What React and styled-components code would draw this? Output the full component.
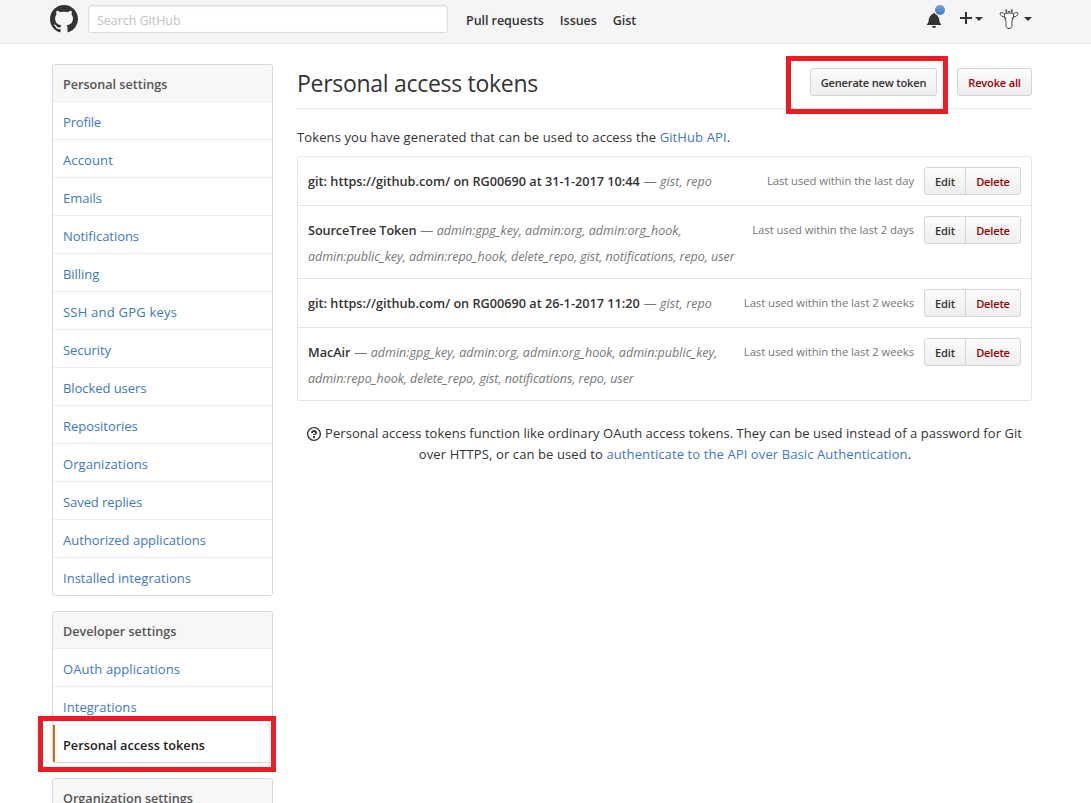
import React from "react";
import styled, { createGlobalStyle, css } from "styled-components";

const GlobalStyle = createGlobalStyle`
  *, *::before, *::after { box-sizing: border-box; }
  html, body { margin: 0; height: 803px; overflow: hidden; }
  body {
    background: #fff;
    color: #333;
    font: 13px/21px "Open Sans", "Noto Sans", sans-serif;
  }
`;

const Header = styled.header`
  height: 44px;
  padding: 5px 59px 0 50px;
  display: flex;
  align-items: flex-start;
  background: #f5f5f5;
  border-bottom: 1px solid #e5e5e5;
`;

const Logo = styled.svg`
  width: 28px;
  height: 28px;
  margin-right: 10px;
  fill: #333;
`;

const Search = styled.input`
  width: 360px;
  height: 28px;
  padding: 2px 8px 0;
  border: 1px solid #ddd;
  border-radius: 3px;
  background: #fff;
  box-shadow: inset 0 1px 2px rgba(0, 0, 0, 0.075);
  font: 12.5px "Open Sans", sans-serif;
  letter-spacing: -0.04px;
  outline: none;
  &::placeholder { color: #c2c2c2; opacity: 1; }
`;

const TopNav = styled.nav`
  display: flex;
  gap: 16px;
  margin-left: 18px;
  padding-top: 5px;
`;

const TopLink = styled.a`
  font-size: 12.5px;
  font-weight: 600;
  letter-spacing: -0.05px;
  color: #333;
`;

const Actions = styled.div`
  display: flex;
  margin-left: auto;
`;

const Bell = styled.div`
  position: relative;
  width: 14px;
  height: 16px;
  margin: 7px 19px 0 0;
  svg { display: block; fill: #333; }
  &::after {
    content: "";
    position: absolute;
    top: -7px;
    left: 8px;
    width: 10px;
    height: 10px;
    border-radius: 50%;
    background: linear-gradient(#7aa1d9, #4078c0);
  }
`;

const MenuButton = styled.div`
  display: flex;
  align-items: flex-start;
  margin-right: ${(p) => p.$gap || 0}px;
  svg { display: block; }
`;

const Caret = styled.span`
  margin: 12px 0 0 ${(p) => p.$gap}px;
  border: 4px solid transparent;
  border-top-color: #333;
  border-bottom: 0;
`;

const PlusIcon = styled.svg`
  margin-top: 5px;
  fill: #333;
`;

const Avatar = styled.svg`
  margin-top: 3px;
  fill: #fff;
  stroke: #444;
  stroke-width: 1;
`;

const Page = styled.div`
  display: flex;
  align-items: flex-start;
  gap: 24px;
  width: 980px;
  margin-left: 52px;
  padding-top: 20px;
`;

const Sidebar = styled.aside`
  width: 221px;
  flex: none;
`;

const Menu = styled.nav`
  margin-bottom: 15px;
  border: 1px solid #d8d8d8;
  border-radius: 3px;
  background: #fff;
`;

const MenuHeading = styled.h3`
  height: 37px;
  margin: 0;
  padding: 10px 10px 0;
  border-bottom: 1px solid #eee;
  border-radius: 2px 2px 0 0;
  background: #f7f7f7;
  color: #555;
  font-size: 12.6px;
  font-weight: 600;
  line-height: 20px;
`;

const highlight = css`
  &::after {
    content: "";
    position: absolute;
    inset: ${(p) => p.$ring};
    border: 5px solid #ed1c24;
    pointer-events: none;
  }
`;

const MenuItem = styled.a`
  display: block;
  position: relative;
  height: 38px;
  padding: 10px 10px 0;
  border-bottom: 1px solid #eee;
  line-height: 20px;
  color: #4078c0;
  letter-spacing: ${(p) => p.$track ?? 0}px;
  &:last-child { height: 37px; border-bottom: 0; }
  ${(p) =>
    p.$selected &&
    css`
      color: #222;
      font-size: 12.75px;
      font-weight: 600;
      &::before {
        content: "";
        position: absolute;
        top: 0;
        bottom: 0;
        left: 0;
        width: 2px;
        background: #d26911;
      }
    `}
  ${(p) => p.$ring && highlight}
`;

const Main = styled.main`
  width: 735px;
  flex: none;
`;

const TitleRow = styled.div`
  display: flex;
  align-items: flex-start;
  height: 45px;
  padding-top: 4px;
  border-bottom: 1px solid #e5e5e5;
`;

const Title = styled.h2`
  margin: 0 auto 0 0;
  font-size: 23px;
  font-weight: 400;
  line-height: 31px;
  letter-spacing: -0.29px;
`;

const Ring = styled.div`
  position: relative;
  margin-right: 20px;
  ${highlight}
`;

const Button = styled.button`
  height: 28px;
  width: ${(p) => p.$width}px;
  padding: 2px 0 0;
  border: 1px solid #d5d5d5;
  border-radius: 3px;
  background: linear-gradient(#fcfcfc, #eee);
  color: ${(p) => (p.$danger ? "#900" : "#333")};
  font: 600 11.1px/24px "Open Sans", sans-serif;
  letter-spacing: -0.19px;
  display: block;
`;

const ButtonGroup = styled.div`
  display: flex;
  flex: none;
  margin-left: 10px;
  ${Button}:first-child { border-radius: 3px 0 0 3px; }
  ${Button}:last-child { border-radius: 0 3px 3px 0; margin-left: -1px; }
`;

const Intro = styled.p`
  margin: 18px 0 8px;
  letter-spacing: 0.115px;
  line-height: 21px;
`;

const Link = styled.a`
  color: #4078c0;
`;

const TokenList = styled.div`
  border: 1px solid #e5e5e5;
  border-radius: 3px;
`;

const TokenRow = styled.div`
  display: flex;
  align-items: flex-start;
  height: ${(p) => (p.$tall ? 73 : 49)}px;
  padding: 10px 10px 0;
  border-bottom: 1px solid #e5e5e5;
  &:last-child { height: 72px; border-bottom: 0; }
`;

const TokenText = styled.div`
  flex: 1;
  line-height: 26px;
  padding-top: 1px;
  white-space: nowrap;
  color: #767676;
`;

const TokenName = styled.strong`
  color: #333;
  font-size: 12.7px;
  font-weight: 600;
  line-height: 1;
  letter-spacing: ${(p) => p.$track || 0}px;
  margin-right: 0.5px;
`;

const Scopes = styled.em`
  font-size: 12.5px;
  line-height: 1;
  letter-spacing: ${(p) => p.$track}px;
`;

const LastUsed = styled.span`
  font-size: 11.3px;
  line-height: 28px;
  letter-spacing: -0.06px;
  color: #767676;
`;

const Help = styled.p`
  margin: 22px 0 0;
  text-align: center;
  white-space: nowrap;
  letter-spacing: 0.05px;
  svg { vertical-align: -4px; fill: #333; margin-right: 4px; }
`;

const HelpTail = styled.span`
  padding-left: 1px;
  letter-spacing: 0.105px;
`;

const personal = [
  ["Profile", -0.17], ["Account", 0.12], ["Emails", -0.05], ["Notifications", -0.04], ["Billing", -0.05],
  ["SSH and GPG keys", 0.22], ["Security", -0.05], ["Blocked users", -0.06], ["Repositories", -0.04],
  ["Organizations", 0.07], ["Saved replies", -0.07], ["Authorized applications"],
  ["Installed integrations", 0.02],
];

const tokens = [
  { name: "git: https://github.com/ on RG00690 at 31-1-2017 10:44", scopes: ["gist, repo"], used: "day" },
  {
    name: "SourceTree Token", track: -0.1, used: "2 days",
    scopes: ["admin:gpg_key, admin:org, admin:org_hook,", "admin:public_key, admin:repo_hook, delete_repo, gist, notifications, repo, user"],
  },
  { name: "git: https://github.com/ on RG00690 at 26-1-2017 11:20", scopes: ["gist, repo"], used: "2 weeks" },
  {
    name: "MacAir", track: -0.05, used: "2 weeks",
    scopes: ["admin:gpg_key, admin:org, admin:org_hook, admin:public_key,", "admin:repo_hook, delete_repo, gist, notifications, repo, user"],
  },
];

function Token({ token }) {
  const [first, second] = token.scopes;
  return (
    <TokenRow $tall={!!second}>
      <TokenText>
        <TokenName $track={token.track}>{token.name}</TokenName> — <Scopes $track={second ? 0.015 : 0.1}>{first}</Scopes>
        {second && (<><br /><Scopes $track={-0.04}>{second}</Scopes></>)}
      </TokenText>
      <LastUsed>Last used within the last {token.used}</LastUsed>
      <ButtonGroup>
        <Button $width={42}>Edit</Button>
        <Button $width={56} $danger>Delete</Button>
      </ButtonGroup>
    </TokenRow>
  );
}

export default function App() {
  return (
    <>
      <GlobalStyle />
      <Header>
        <Logo viewBox="0 0 16 16">
          <path d="M8 0C3.58 0 0 3.58 0 8c0 3.54 2.29 6.53 5.47 7.59.4.07.55-.17.55-.38 0-.19-.01-.82-.01-1.49-2.01.37-2.53-.49-2.69-.94-.09-.23-.48-.94-.82-1.13-.28-.15-.68-.52-.01-.53.63-.01 1.08.58 1.23.82.72 1.21 1.87.87 2.33.66.07-.52.28-.87.51-1.07-1.78-.2-3.64-.89-3.64-3.95 0-.87.31-1.59.82-2.15-.08-.2-.36-1.02.08-2.12 0 0 .67-.21 2.2.82.64-.18 1.32-.27 2-.27.68 0 1.36.09 2 .27 1.53-1.04 2.2-.82 2.2-.82.44 1.1.16 1.92.08 2.12.51.56.82 1.27.82 2.15 0 3.07-1.87 3.75-3.65 3.95.29.25.54.73.54 1.48 0 1.07-.01 1.93-.01 2.2 0 .21.15.46.55.38A8.013 8.013 0 0 0 16 8c0-4.42-3.58-8-8-8z" />
        </Logo>
        <Search placeholder="Search GitHub" />
        <TopNav>
          <TopLink>Pull requests</TopLink>
          <TopLink>Issues</TopLink>
          <TopLink>Gist</TopLink>
        </TopNav>
        <Actions>
          <Bell>
            <svg width="14" height="16" viewBox="0 0 14 16">
              <path d="M14 12v1H0v-1l.73-.58c.77-.77.81-2.55 1.19-4.42C2.69 3.23 6 2 6 2c0-.55.45-1 1-1s1 .45 1 1c0 0 3.39 1.23 4.16 5 .38 1.88.42 3.66 1.19 4.42l.66.58H14zm-7 4c1.11 0 2-.89 2-2H5c0 1.11.89 2 2 2z" />
            </svg>
          </Bell>
          <MenuButton $gap={16}>
            <PlusIcon width="12" height="16" viewBox="0 0 12 16"><path d="M12 9H7v5H5V9H0V7h5V2h2v5h5z" /></PlusIcon>
            <Caret $gap={3} />
          </MenuButton>
          <MenuButton>
            <Avatar width="20" height="22" viewBox="0 0 20 22">
              <path d="M6 6.500C4.500 4.500 2.500 4.300 1 5c.3 2.300 2 4.200 5 3.800zM14 6.500c1.500-2 3.500-2.200 5-1.500-.3 2.300-2 4.200-5 3.800z" />
              <path d="M5.500 6C7 4.700 13 4.700 14.500 6c.5 2.500-.6 5-1.500 7-.4 1.500.1 3 0 4.700-.2 1.800-1.300 2.800-3 2.800s-2.800-1-3-2.800c-.1-1.700.4-3.200 0-4.700-.9-2-2-4.500-1.500-7z" />
              <path d="M7.200 5V2M12.800 5V2" strokeWidth="1.200" />
              <path d="M6.200 2h2M11.800 2h2M8.800 3.600h2.400" strokeWidth="1.200" />
              <path d="M6.600 9.500v2M13.400 9.500v2" strokeWidth="1.200" />
            </Avatar>
            <Caret $gap={5} />
          </MenuButton>
        </Actions>
      </Header>
      <Page>
        <Sidebar>
          <Menu>
            <MenuHeading>Personal settings</MenuHeading>
            {personal.map(([label, track]) => (
              <MenuItem key={label} $track={track}>{label}</MenuItem>
            ))}
          </Menu>
          <Menu>
            <MenuHeading>Developer settings</MenuHeading>
            <MenuItem $track={0.1}>OAuth applications</MenuItem>
            <MenuItem $track={0.05}>Integrations</MenuItem>
            <MenuItem $selected $track={0} $ring="-9px -4px -10px -15px">Personal access tokens</MenuItem>
          </Menu>
          <Menu>
            <MenuHeading>Organization settings</MenuHeading>
          </Menu>
        </Sidebar>
        <Main>
          <TitleRow>
            <Title>Personal access tokens</Title>
            <Ring $ring="-12px -11px -18px -24px">
              <Button $width={127}>Generate new token</Button>
            </Ring>
            <Button $width={75} $danger>Revoke all</Button>
          </TitleRow>
          <Intro>
            Tokens you have generated that can be used to access the <Link>GitHub API</Link>.
          </Intro>
          <TokenList>
            {tokens.map((t) => <Token key={t.name} token={t} />)}
          </TokenList>
          <Help>
            <svg width="14" height="16" viewBox="0 0 14 16">
              <path d="M6 10h2v2H6v-2zm4-3.500C10 8.640 8 9 8 9H6c0-.55.45-1 1-1h.5c.28 0 .5-.22.5-.5v-1c0-.28-.22-.5-.5-.5h-1c-.28 0-.5.22-.5.5V7H4c0-1.500 1.500-3 3-3s3 1 3 2.500zM7 2.300c3.140 0 5.700 2.560 5.700 5.700s-2.560 5.700-5.700 5.700A5.710 5.710 0 0 1 1.300 8c0-3.140 2.560-5.700 5.700-5.700zM7 1C3.140 1 0 4.140 0 8s3.140 7 7 7 7-3.140 7-7-3.140-7-7-7z" />
            </svg>
            Personal access tokens function like ordinary OAuth access tokens. They can be used instead of a password for Git
            <br />
            <HelpTail>
              over HTTPS, or can be used to <Link>authenticate to the API over Basic Authentication</Link>.
            </HelpTail>
          </Help>
        </Main>
      </Page>
    </>
  );
}
